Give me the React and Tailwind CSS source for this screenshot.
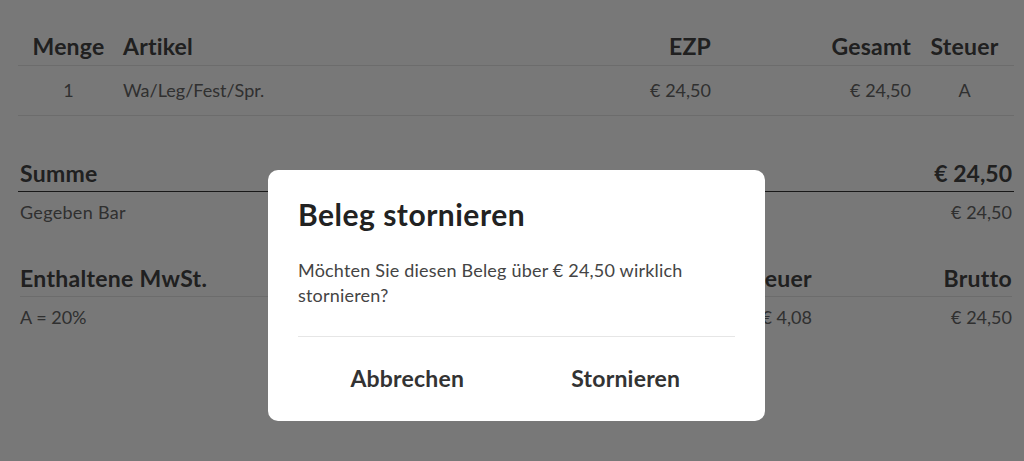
export default function App() {
  const font = { fontFamily: "Lato, 'Liberation Sans', sans-serif" };
  const th = "flex h-[38px] items-center border-b border-[#e6e6e6] text-[23px] font-bold tracking-[0.2px]";
  const td = "flex h-[50px] items-center border-b border-[#e6e6e6] text-[18px] text-[#666]";
  const mh = "flex h-[36px] items-center border-b border-[#e6e6e6] text-[23px] font-bold tracking-[0.3px] text-[#444]";
  const md = "flex h-[40px] items-center text-[18px] text-[#666]";
  return (
    <div className="relative min-h-[461px] w-[1024px] overflow-hidden bg-white" style={font}>
      <div className="pl-[18px] pr-[10px] pt-[28px]">
        {/* Items table */}
        <div className="grid grid-cols-[101px_1fr_180px_200px_99px] text-[#444]">
          <div className={`${th} justify-center`}>Menge</div>
          <div className={`${th} pl-1`}>Artikel</div>
          <div className={`${th} justify-end pr-1`}>EZP</div>
          <div className={`${th} justify-end pr-1`}>Gesamt</div>
          <div className={`${th} justify-center`}>Steuer</div>

          <div className={`${td} justify-center`}>1</div>
          <div className={`${td} pl-1`}>Wa/Leg/Fest/Spr.</div>
          <div className={`${td} justify-end pr-1`}>€ 24,50</div>
          <div className={`${td} justify-end pr-1`}>€ 24,50</div>
          <div className={`${td} justify-center`}>A</div>
        </div>

        {/* Summe */}
        <div className="mt-[40px] flex h-[36px] items-center justify-between border-b border-[#333] px-[2px] text-[23px] font-bold tracking-[0.3px] text-[#444]">
          <span>Summe</span>
          <span className="tracking-normal">€ 24,50</span>
        </div>
        <div className="flex h-[41px] items-center justify-between px-[2px] text-[18px] text-[#666]">
          <span className="tracking-[0.3px]">Gegeben Bar</span>
          <span>€ 24,50</span>
        </div>

        {/* MwSt */}
        <div className="mt-[28px] grid grid-cols-[1fr_200px_200px_200px] px-[2px]">
          <div className={mh}>Enthaltene MwSt.</div>
          <div className={`${mh} justify-end`}></div>
          <div className={`${mh} justify-end`}>Steuer</div>
          <div className={`${mh} justify-end`}>Brutto</div>

          <div className={md}>A = 20%</div>
          <div className={`${md} justify-end`}></div>
          <div className={`${md} justify-end`}>€ 4,08</div>
          <div className={`${md} justify-end`}>€ 24,50</div>
        </div>
      </div>

      {/* Overlay + dialog */}
      <div className="absolute inset-0 flex justify-center bg-[rgba(0,0,0,0.53)] pl-[9px] pt-[170px]">
        <div className="h-[251px] w-[497px] rounded-[10px] bg-white px-[30px] pt-[24px]">
          <h2 className="text-[30px] font-bold leading-[40px] tracking-[0.5px] text-[#222]">Beleg stornieren</h2>
          <p className="mt-[24px] text-[18px] leading-[25px] tracking-[0.2px] text-[#444]">
            Möchten Sie diesen Beleg über € 24,50 wirklich stornieren?
          </p>
          <div className="mt-[28px] border-t border-[#e6e6e6]" />
          <div className="grid h-[83px] grid-cols-2">
            <button className="flex items-center justify-center text-[23px] font-bold tracking-[0.2px] text-[#333]">Abbrechen</button>
            <button className="flex items-center justify-center text-[23px] font-bold tracking-[0.2px] text-[#333]">Stornieren</button>
          </div>
        </div>
      </div>
    </div>
  );
}
